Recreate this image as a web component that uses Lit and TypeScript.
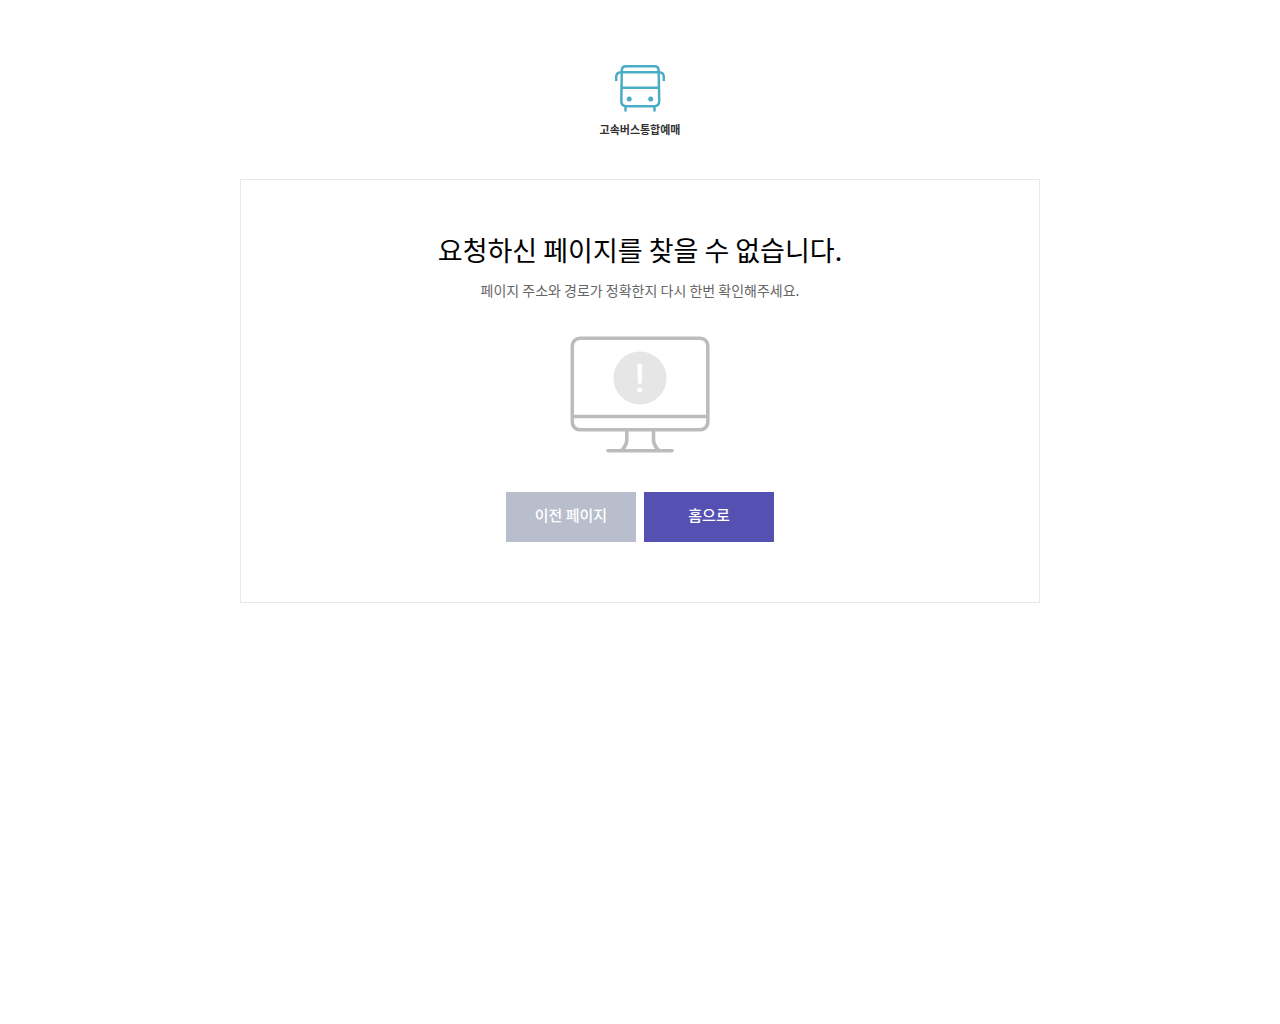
import { LitElement, html, css } from "lit";
import { customElement } from "lit/decorators.js";

@customElement("app-root")
export class AppRoot extends LitElement {
  static styles = css`
    :host {
      display: block;
      background: #fff;
      color: #000;
      font-family: "Noto Sans CJK KR", "Noto Sans", sans-serif;
    }
    .page {
      display: flex;
      flex-direction: column;
      align-items: center;
      gap: 42px;
      padding: 64px 16px;
    }
    .brand {
      display: flex;
      flex-direction: column;
      align-items: center;
      gap: 8px;
      color: #333;
      font-size: 11px;
      font-weight: 700;
      line-height: 16px;
      text-decoration: none;
    }
    svg {
      display: block;
    }
    .panel {
      box-sizing: border-box;
      width: 100%;
      max-width: 800px;
      padding: 50px 20px 60px;
      border: 1px solid #e8e8e8;
      display: flex;
      flex-direction: column;
      align-items: center;
      text-align: center;
    }
    .title {
      margin: 0;
      font-size: 27px;
      font-weight: 400;
      line-height: 40px;
    }
    .guide {
      margin: 10px 0 36px;
      color: #666;
      font-size: 14px;
      line-height: 20px;
    }
    .actions {
      display: flex;
      flex-wrap: wrap;
      justify-content: center;
      gap: 8px;
      margin-top: 38px;
    }
    .button {
      box-sizing: border-box;
      width: 130px;
      height: 50px;
      margin: 0;
      padding: 0 0 4px;
      border: 0;
      color: #fff;
      background: #b8becc;
      font: 500 15px/46px "Noto Sans CJK KR", "Noto Sans", sans-serif;
      text-align: center;
      text-decoration: none;
      cursor: pointer;
    }
    .primary {
      background: #5551b3;
    }
  `;

  private goBack() {
    history.back();
  }

  render() {
    return html`
      <div class="page">
        <header>
          <a class="brand" href="/">
            <svg width="52" height="49" viewBox="0 0 52 49" fill="none" stroke="#4bacc6" stroke-width="2.5" aria-hidden="true">
              <path d="M7.800 6.500Q7.800 2.200 12 2.200H40.500Q44.700 2.200 44.700 6.500L45.200 37Q45.200 42.200 40 42.200H12.500Q7.300 42.200 7.300 37Z" />
              <path d="M2.200 17V13Q2.200 8.200 7 8.200H45Q49.800 8.200 49.800 13V17M7.500 23.700H45M11.500 42V47.500M40.500 42V47.500" />
              <g fill="#4bacc6" stroke="none"><circle cx="15.200" cy="35" r="2.500" /><circle cx="36.700" cy="35" r="2.500" /></g>
            </svg>
            <span>고속버스통합예매</span>
          </a>
        </header>
        <main class="panel">
          <h1 class="title">요청하신 페이지를 찾을 수 없습니다.</h1>
          <p class="guide">페이지 주소와 경로가 정확한지 다시 한번 확인해주세요.</p>
          <svg width="140" height="118" viewBox="0 0 140 118" fill="none" stroke="#bcbcbc" stroke-width="3.600" aria-hidden="true">
            <rect x="2.300" y="2.300" width="135.500" height="91.500" rx="7.500" />
            <path d="M2.300 80.500H137.800" />
            <path d="M56.800 94V104Q56.800 109 51.500 114.500M83.500 94V104Q83.500 109 88.800 114.500" />
            <path d="M38 114.700H102" stroke-linecap="round" />
            <circle cx="70" cy="42" r="26.500" fill="#e6e6e6" stroke="none" />
            <path d="M67.300 30Q67.300 27.500 69.800 27.500T72.300 30L71.800 46Q71.700 48.300 69.800 48.300T67.900 46Z" fill="#fff" stroke="none" />
            <circle cx="69.800" cy="54" r="2.500" fill="#fff" stroke="none" />
          </svg>
          <div class="actions">
            <button class="button" type="button" @click=${this.goBack}>이전 페이지</button>
            <a class="button primary" href="/">홈으로</a>
          </div>
        </main>
      </div>
    `;
  }
}
